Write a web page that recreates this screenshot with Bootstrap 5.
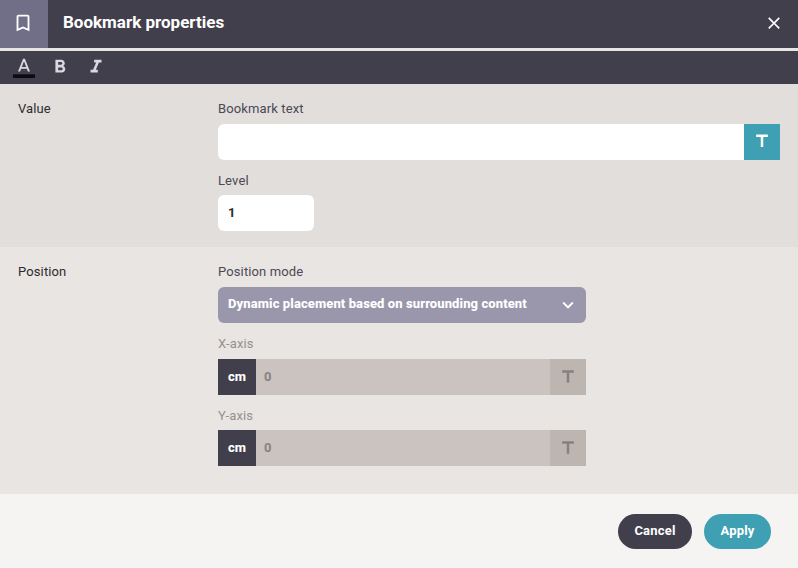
<!DOCTYPE html>
<html lang="en">
<head>
<meta charset="utf-8">
<meta name="viewport" content="width=device-width, initial-scale=1">
<title>Bookmark properties</title>
<link href="https://cdn.jsdelivr.net/npm/bootstrap@5.3.0/dist/css/bootstrap.min.css" rel="stylesheet">
<style>
body{font-family:Roboto,"Liberation Sans",sans-serif;font-size:13px;line-height:17px;color:#2d2b2d;background:#e8e5e2;height:568px;overflow:hidden}
svg{display:block;fill:currentColor;flex:none}
.dlg-head{height:48px;background:#423f4d;color:#fff;padding-right:14px}
.dlg-icon{width:48px;height:48px;background:#716e87;padding:12px 0 0 12px}
.dlg-title{font-size:17px;line-height:20px;font-weight:700;margin:-5px 0 0 15px}
.icon-btn{background:none;border:0;padding:0;color:inherit}
.tools{height:33px;margin-top:3px;background:#423f4d;color:#d9d7e0;padding:5px 0 0 13px;gap:14px}
.sect{padding:16px 18px 0}
.sect-value{height:163px;background:#e1dedb}
.sect-pos{height:247px;background:#e8e5e2}
.sect-name{width:200px;letter-spacing:.12px}
.field-label{display:block;margin-bottom:7px;color:#4c4955;letter-spacing:.12px}
.fields>div:last-child>.field-label{margin-bottom:6px}
.off{color:#96918f}
.fields{gap:12px}
.box{height:36px;font-size:13px;font-weight:700;border:0;border-radius:6px;padding:0 10px 1px;color:#2d2b2d}
.box-text{border-radius:6px 0 0 6px}
.box-level{width:96px}
.tbtn{width:36px;height:36px;border:0;padding:0 0 0 8px;background:#3fa0b3;color:#fff}
.mode{width:368px;background:#9a97ac;color:#fff;padding-right:7px;padding-bottom:3px;font-weight:800;letter-spacing:.1px}
.mode svg{margin-top:2px}
.axis{width:368px}
.unit{width:38px;height:36px;background:#423f4d;color:#fff;font-weight:800;padding-bottom:1px}
.axis .box,.axis .box:disabled{background:#cbc3c0;color:#87817e;border-radius:0;padding-left:8px}
.axis .tbtn{background:#bdb5b0;color:#87817e}
.foot{height:74px;background:#f5f4f2;padding:20px 27px 0;gap:12px}
.pill{height:35px;border-radius:18px;padding:0 0 1px;font-size:13px;font-weight:700;letter-spacing:.2px;color:#fff;border:0}
.pill-cancel{width:74px;background:#423f4d}
.pill-apply{width:67px;background:#3fa0b3}
</style>
<script src="https://cdn.jsdelivr.net/npm/bootstrap@5.3.0/dist/js/bootstrap.bundle.min.js"></script>
</head>
<body>
<header class="dlg-head d-flex align-items-center">
  <div class="dlg-icon"><svg width="22" height="22" viewBox="0 0 24 24"><path d="M17 3H7c-1.100 0-1.990.9-1.990 2L5 21l7-3 7 3V5c0-1.100-.9-2-2-2zm0 15l-5-2.180L7 18V5h10v13z"/></svg></div>
  <h1 class="dlg-title">Bookmark properties</h1>
  <button class="icon-btn ms-auto" aria-label="Close"><svg width="20" height="20" viewBox="0 1 24 24"><path d="M19 6.410L17.590 5 12 10.590 6.410 5 5 6.410 10.590 12 5 17.590 6.410 19 12 13.410 17.590 19 19 17.590 13.410 12z"/></svg></button>
</header>
<div class="tools d-flex align-items-start">
  <button class="icon-btn" aria-label="Text color"><svg width="22" height="22" viewBox="0 0 24 24"><path fill="#0c0b12" d="M0 20h24v4H0z"/><path d="M11 3L5.500 17h2.250l1.120-3h6.250l1.120 3h2.250L13 3h-2zm-1.380 9L12 5.670 14.380 12H9.620z"/></svg></button>
  <button class="icon-btn" aria-label="Bold"><svg width="22" height="22" viewBox="0 0 24 24"><path d="M15.600 10.790c.97-.67 1.650-1.770 1.650-2.790 0-2.260-1.750-4-4-4H7v14h7.040c2.090 0 3.710-1.700 3.710-3.790 0-1.520-.86-2.820-2.150-3.420zM10 6.500h3c.83 0 1.500.67 1.500 1.500s-.67 1.500-1.500 1.500h-3v-3zm3.500 9H10v-3h3.500c.83 0 1.500.67 1.500 1.500s-.67 1.500-1.500 1.500z"/></svg></button>
  <button class="icon-btn" aria-label="Italic"><svg width="22" height="22" viewBox="0 0 24 24"><path d="M10 4v3h2.210l-3.420 8H6v3h8v-3h-2.210l3.420-8H18V4z"/></svg></button>
</div>
<main>
  <section class="sect sect-value d-flex">
    <div class="sect-name flex-shrink-0">Value</div>
    <div class="fields d-flex flex-column flex-grow-1">
      <div>
        <label class="field-label" for="btext">Bookmark text</label>
        <div class="d-flex"><input id="btext" class="box box-text form-control" type="text"><button class="tbtn flex-shrink-0" aria-label="Insert text"><svg width="20" height="20" viewBox="0 1 24 24"><path d="M5 4v3h5.500v12h3V7H19V4z"/></svg></button></div>
      </div>
      <div>
        <label class="field-label" for="level">Level</label>
        <input id="level" class="box box-level form-control" type="text" value="1">
      </div>
    </div>
  </section>
  <section class="sect sect-pos d-flex">
    <div class="sect-name flex-shrink-0">Position</div>
    <div class="fields d-flex flex-column">
      <div>
        <span class="field-label">Position mode</span>
        <button class="box mode d-flex align-items-center justify-content-between"><span>Dynamic placement based on surrounding content</span><svg width="22" height="22" viewBox="0 0 24 24"><path d="M16.590 8.590L12 13.170 7.410 8.590 6 10l6 6 6-6z"/></svg></button>
      </div>
      <div>
        <label class="field-label off" for="xa">X-axis</label>
        <div class="axis d-flex"><span class="unit d-flex align-items-center justify-content-center flex-shrink-0">cm</span><input id="xa" class="box form-control" value="0" disabled><button class="tbtn flex-shrink-0" disabled aria-label="Insert X text"><svg width="20" height="20" viewBox="0 0 24 24"><path d="M5 4v3h5.500v12h3V7H19V4z"/></svg></button></div>
      </div>
      <div>
        <label class="field-label off" for="ya">Y-axis</label>
        <div class="axis d-flex"><span class="unit d-flex align-items-center justify-content-center flex-shrink-0">cm</span><input id="ya" class="box form-control" value="0" disabled><button class="tbtn flex-shrink-0" disabled aria-label="Insert Y text"><svg width="20" height="20" viewBox="0 0 24 24"><path d="M5 4v3h5.500v12h3V7H19V4z"/></svg></button></div>
      </div>
    </div>
  </section>
</main>
<footer class="foot d-flex justify-content-end">
  <button class="pill pill-cancel btn">Cancel</button>
  <button class="pill pill-apply btn">Apply</button>
</footer>
</body>
</html>
